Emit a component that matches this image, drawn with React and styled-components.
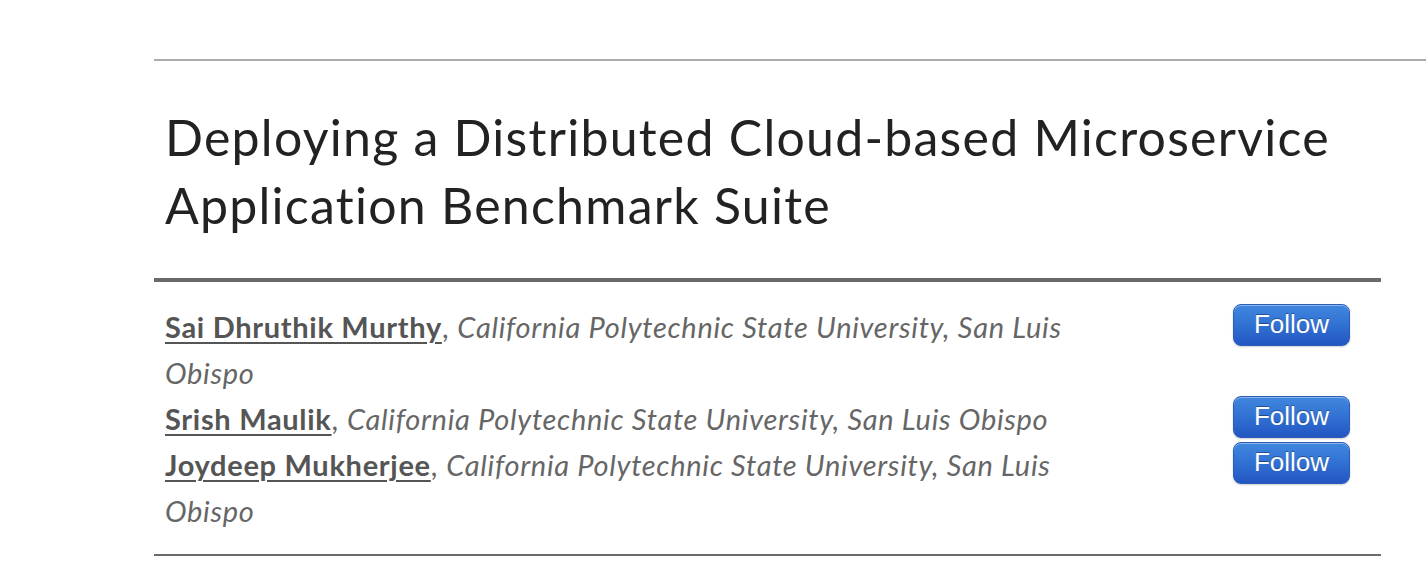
import styled, { createGlobalStyle } from "styled-components";

const Global = createGlobalStyle`
  body {
    margin: 0;
    background: #fff;
    font-family: "Lato", "Liberation Sans", sans-serif;
    font-variant-ligatures: none;
  }
`;

const Page = styled.div`
  padding: 59px 0 0 154px;
  width: 1272px;
`;

const TopRule = styled.hr`
  margin: 0;
  border: 0;
  border-top: 2px solid #ababab;
  width: 100%;
`;

const Main = styled.div`
  width: 1227px;
`;

const Title = styled.h1`
  margin: 42px 0 39px;
  padding-left: 11px;
  font-size: 50px;
  line-height: 68px;
  letter-spacing: 1.25px;
  font-weight: 400;
  color: #222;
`;

const ThickRule = styled.hr`
  margin: 0;
  border: 0;
  border-top: 4px solid #6a6a6a;
`;

const Authors = styled.div`
  padding: 22px 0 20px;
  border-bottom: 2px solid #6a6a6a;
`;

const Row = styled.div`
  display: flex;
  justify-content: space-between;
  align-items: flex-start;
  padding: 0 31px 0 11px;
`;

const Info = styled.p`
  flex: 0 0 920px;
  margin: 0;
  font-size: 29px;
  line-height: 46px;
  letter-spacing: 0.7px;
  color: #666;
`;

const Name = styled.a`
  font-weight: 700;
  color: #555;
  text-decoration: underline;
  text-underline-offset: 4px;
  text-decoration-thickness: 2px;
`;

const Affiliation = styled.em`
  font-style: italic;
  color: #666;
`;

const FollowButton = styled.button`
  box-sizing: border-box;
  width: 117px;
  height: 42px;
  border: 1px solid #2a5cb8;
  border-radius: 8px;
  background: linear-gradient(#4087de 0%, #3273d4 45%, #2356c2 100%);
  box-shadow: inset 0 1px 0 rgba(255, 255, 255, 0.4), 0 1px 2px rgba(0, 0, 0, 0.2);
  color: #fff;
  font-family: "Liberation Sans", Arial, sans-serif;
  font-size: 26px;
  line-height: 1;
  text-shadow: 0 -1px 0 rgba(0, 0, 0, 0.35);
  padding: 0 0 2px;
  cursor: pointer;
`;

const authors = [
  { name: "Sai Dhruthik Murthy", school: "California Polytechnic State University, San Luis Obispo" },
  { name: "Srish Maulik", school: "California Polytechnic State University, San Luis Obispo" },
  { name: "Joydeep Mukherjee", school: "California Polytechnic State University, San Luis Obispo" },
];

export default function App() {
  return (
    <>
      <Global />
      <Page>
        <TopRule />
        <Main>
          <Title>
            Deploying a Distributed Cloud-based Microservice Application Benchmark Suite
          </Title>
          <ThickRule />
          <Authors>
            {authors.map((a) => (
              <Row key={a.name}>
                <Info>
                  <Name href="#">{a.name}</Name>, <Affiliation>{a.school}</Affiliation>
                </Info>
                <FollowButton>Follow</FollowButton>
              </Row>
            ))}
          </Authors>
        </Main>
      </Page>
    </>
  );
}
